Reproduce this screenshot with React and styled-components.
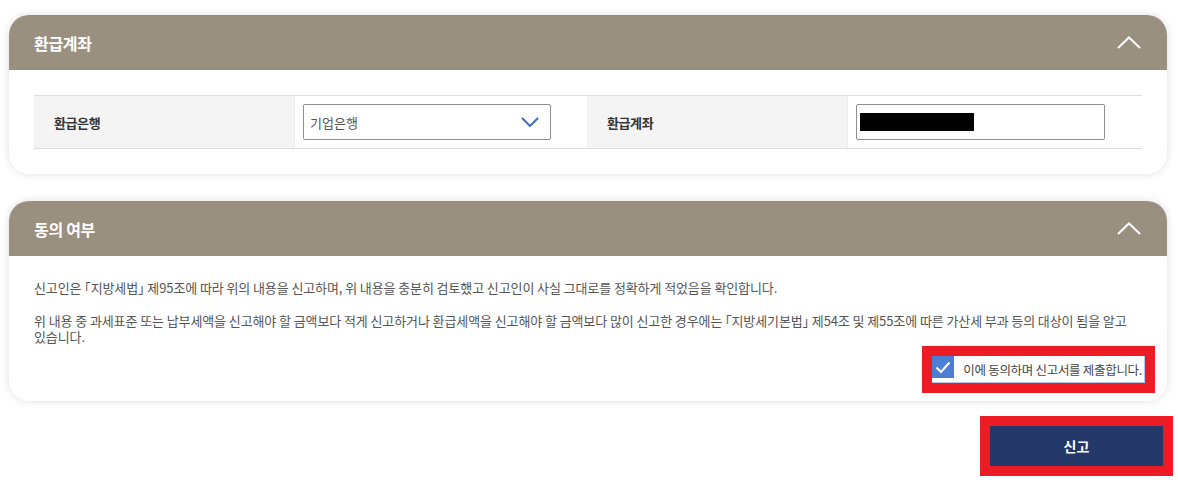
import React from 'react'
import styled, { createGlobalStyle } from 'styled-components'

const GlobalStyle = createGlobalStyle`
  html, body {
    margin: 0;
    padding: 0;
    background: #fff;
  }
  body {
    font-family: "Noto Sans CJK KR", "Noto Sans", sans-serif;
    color: #333;
  }
`

const Page = styled.div`
  padding: 15px 11px 0 9px;
  display: flex;
  flex-direction: column;
  gap: 27px;
`

const Card = styled.section`
  background: #fff;
  border-radius: 20px;
  box-shadow: 0 0 8px rgba(0, 0, 0, 0.13);
  overflow: hidden;
`

const CardHeader = styled.div`
  height: 55px;
  background: #9a907f;
  display: flex;
  align-items: center;
  justify-content: space-between;
  padding: 0 26px 0 25px;
`

const CardTitle = styled.h2`
  margin: 0;
  font-size: 16px;
  font-weight: 700;
  color: #fff;
  letter-spacing: -0.3px;
`

const CardBody = styled.div`
  padding: ${p => p.$pad || '25px 25px 25px'};
`

const Table = styled.div`
  display: grid;
  grid-template-columns: 261px 292px 261px 1fr;
  border-top: 1px solid #dcdcdc;
  border-bottom: 1px solid #dcdcdc;
`

const LabelCell = styled.div`
  background: #f4f4f4;
  height: 52px;
  display: flex;
  align-items: center;
  padding-left: 20px;
  font-size: 13px;
  font-weight: 700;
  color: #333;
  letter-spacing: -0.4px;
  border-right: 1px solid #ececec;
`

const ValueCell = styled.div`
  display: flex;
  align-items: center;
  padding-left: 8px;
`

const SelectBox = styled.div`
  width: 248px;
  height: 36px;
  box-sizing: border-box;
  border: 1px solid #8f8f8f;
  border-radius: 2px;
  display: flex;
  align-items: center;
  justify-content: space-between;
  padding: 0 11px 0 6px;
  font-size: 13px;
  color: #555;
`

const InputBox = styled.div`
  width: 249px;
  height: 36px;
  box-sizing: border-box;
  border: 1px solid #8f8f8f;
  border-radius: 2px;
  display: flex;
  align-items: center;
  padding: 0 3px;
`

const Masked = styled.span`
  display: block;
  width: 114px;
  height: 18px;
  background: #000;
`

const Paragraph = styled.p`
  margin: 0 0 17px;
  font-size: 13px;
  line-height: 16px;
  color: #555;
  letter-spacing: -0.1px;
  word-break: keep-all;
  font-feature-settings: "halt";
  &:last-of-type {
    margin-bottom: 0;
  }
`

const AgreeRow = styled.div`
  display: flex;
  justify-content: flex-end;
  margin-top: 1px;
  margin-right: -13px;
`

const Marked = styled.div`
  border: 10px solid #ed1c24;
  display: flex;
`

const AgreeLabel = styled.label`
  display: flex;
  align-items: center;
  gap: 9px;
  background: #fff;
  height: 27px;
  box-sizing: border-box;
  padding-right: 2px;
  border-right: 1px solid #b4c8ea;
  border-bottom: 1px solid #b4c8ea;
  font-size: 12.5px;
  color: #444;
  letter-spacing: -0.3px;
  cursor: pointer;
`

const CheckMark = styled.span`
  width: 22px;
  height: 22px;
  background: #4a7fd4;
  display: flex;
  align-items: center;
  justify-content: center;
  align-self: flex-start;
`

const ButtonRow = styled.div`
  display: flex;
  justify-content: flex-end;
  margin-top: -12px;
  margin-right: -6px;
`

const SubmitButton = styled.button`
  width: 173px;
  height: 40px;
  background: #243769;
  color: #fff;
  border: none;
  font-family: inherit;
  font-size: 14px;
  font-weight: 700;
  cursor: pointer;
`

const ChevronUp = () => (
  <svg width="24" height="13" viewBox="0 0 24 13" fill="none">
    <path d="M1 12 L12 1.5 L23 12" stroke="#fff" strokeWidth="2" />
  </svg>
)

const ChevronDown = () => (
  <svg width="18" height="10" viewBox="0 0 18 10" fill="none">
    <path d="M1 1 L9 9 L17 1" stroke="#3f6fc1" strokeWidth="2" />
  </svg>
)

const Check = () => (
  <svg width="16" height="13" viewBox="0 0 16 13" fill="none">
    <path d="M1.5 6.5 L6 11 L14.5 1.5" stroke="#fff" strokeWidth="2.2" />
  </svg>
)

function App() {
  return (
    <>
      <GlobalStyle />
      <Page>
        <Card>
          <CardHeader>
            <CardTitle>환급계좌</CardTitle>
            <ChevronUp />
          </CardHeader>
          <CardBody>
            <Table>
              <LabelCell>환급은행</LabelCell>
              <ValueCell>
                <SelectBox>
                  <span>기업은행</span>
                  <ChevronDown />
                </SelectBox>
              </ValueCell>
              <LabelCell>환급계좌</LabelCell>
              <ValueCell>
                <InputBox>
                  <Masked />
                </InputBox>
              </ValueCell>
            </Table>
          </CardBody>
        </Card>

        <Card>
          <CardHeader>
            <CardTitle>동의 여부</CardTitle>
            <ChevronUp />
          </CardHeader>
          <CardBody $pad="24px 25px 8px">
            <Paragraph>
              신고인은 「지방세법」 제95조에 따라 위의 내용을 신고하며, 위 내용을 충분히 검토했고 신고인이 사실 그대로를 정확하게 적었음을 확인합니다.
            </Paragraph>
            <Paragraph>
              위 내용 중 과세표준 또는 납부세액을 신고해야 할 금액보다 적게 신고하거나 환급세액을 신고해야 할 금액보다 많이 신고한 경우에는 「지방세기본법」 제54조 및 제55조에 따른 가산세 부과 등의 대상이 됨을 알고 있습니다.
            </Paragraph>
            <AgreeRow>
              <Marked>
                <AgreeLabel>
                  <CheckMark><Check /></CheckMark>
                  이에 동의하며 신고서를 제출합니다.
                </AgreeLabel>
              </Marked>
            </AgreeRow>
          </CardBody>
        </Card>

        <ButtonRow>
          <Marked>
            <SubmitButton>신고</SubmitButton>
          </Marked>
        </ButtonRow>
      </Page>
    </>
  )
}

export default App
